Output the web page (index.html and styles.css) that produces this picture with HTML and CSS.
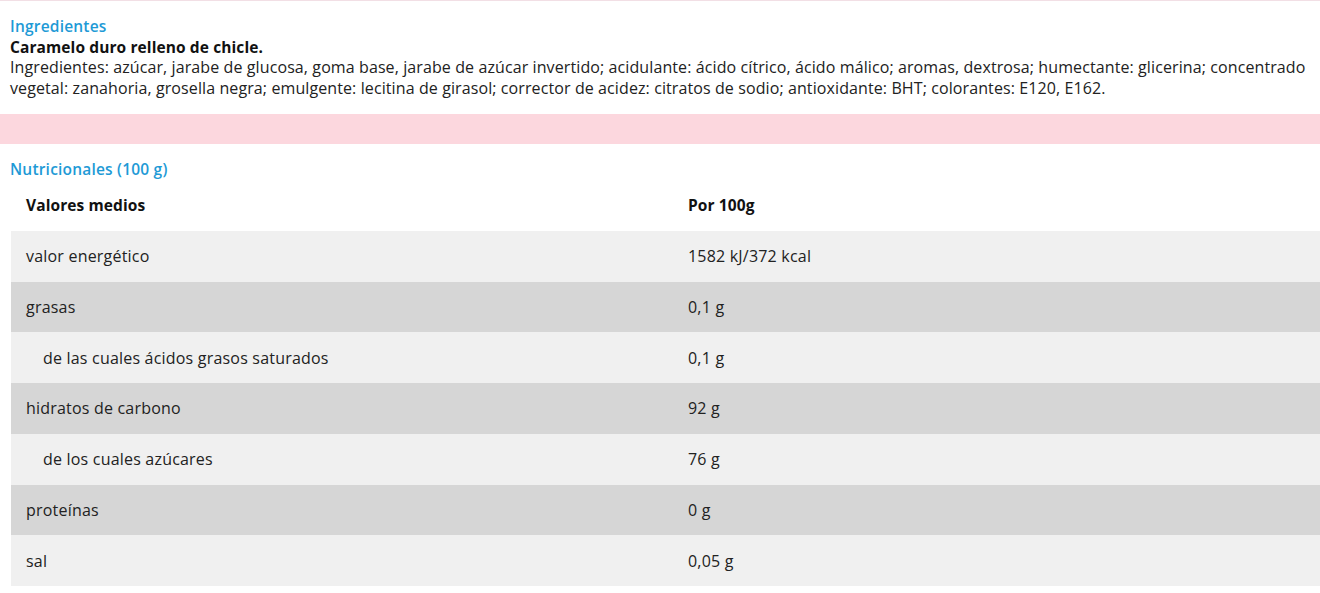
FILE: index.html
```html
<!DOCTYPE html>
<html lang="es">
<head>
<meta charset="utf-8">
<link rel="stylesheet" href="styles.css">
</head>
<body>
<div class="page">
  <section class="ingredients">
    <h2 class="title">Ingredientes</h2>
    <p class="lead">Caramelo duro relleno de chicle.</p>
    <p class="text">Ingredientes: azúcar, jarabe de glucosa, goma base, jarabe de azúcar invertido; acidulante: ácido cítrico, ácido málico; aromas, dextrosa; humectante: glicerina; concentrado vegetal: zanahoria, grosella negra; emulgente: lecitina de girasol; corrector de acidez: citratos de sodio; antioxidante: BHT; colorantes: E120, E162.</p>
  </section>
  <div class="band"></div>
  <section class="nutrition">
    <h2 class="title">Nutricionales (100 g)</h2>
    <div class="table">
      <div class="row head"><div class="cell">Valores medios</div><div class="cell">Por 100g</div></div>
      <div class="row light"><div class="cell">valor energético</div><div class="cell">1582 kJ/372 kcal</div></div>
      <div class="row dark"><div class="cell">grasas</div><div class="cell">0,1 g</div></div>
      <div class="row light"><div class="cell sub">de las cuales ácidos grasos saturados</div><div class="cell">0,1 g</div></div>
      <div class="row dark"><div class="cell">hidratos de carbono</div><div class="cell">92 g</div></div>
      <div class="row light"><div class="cell sub">de los cuales azúcares</div><div class="cell">76 g</div></div>
      <div class="row dark"><div class="cell">proteínas</div><div class="cell">0 g</div></div>
      <div class="row light"><div class="cell">sal</div><div class="cell">0,05 g</div></div>
    </div>
  </section>
</div>
</body>
</html>
```

FILE: styles.css
```css
html, body {
  margin: 0;
  padding: 0;
  background: #ffffff;
}
body {
  font-family: "Open Sans", "Liberation Sans", sans-serif;
  font-size: 16px;
  letter-spacing: 0.2px;
  color: #222222;
  border-top: 1px solid #f2dfe5;
}
.page {
  display: flex;
  flex-direction: column;
}
.ingredients {
  padding: 15px 0 15px 10px;
}
.title {
  margin: 0;
  font-size: 15.5px;
  font-weight: 600;
  letter-spacing: 0.2px;
  color: #1e9ad6;
  line-height: 21px;
}
.lead {
  margin: 0;
  font-size: 15.5px;
  font-weight: 700;
  letter-spacing: 0.1px;
  line-height: 20px;
  color: #111111;
}
.text {
  margin: 0;
  line-height: 21px;
  letter-spacing: 0.1px;
}
.band {
  height: 30px;
  background: #fcd7de;
}
.nutrition {
  padding: 15px 0 0 11px;
}
.nutrition .title {
  margin-left: -1px;
}
.table {
  display: flex;
  flex-direction: column;
}
.row {
  display: grid;
  grid-template-columns: 662px 1fr;
  height: 50.75px;
  align-items: center;
}
.row.head {
  font-size: 15.5px;
  font-weight: 700;
  letter-spacing: 0.1px;
  color: #111111;
}
.row.light {
  background: #f0f0f0;
}
.row.dark {
  background: #d6d6d6;
}
.cell {
  padding-left: 15px;
}
.cell.sub {
  padding-left: 32px;
}
```
